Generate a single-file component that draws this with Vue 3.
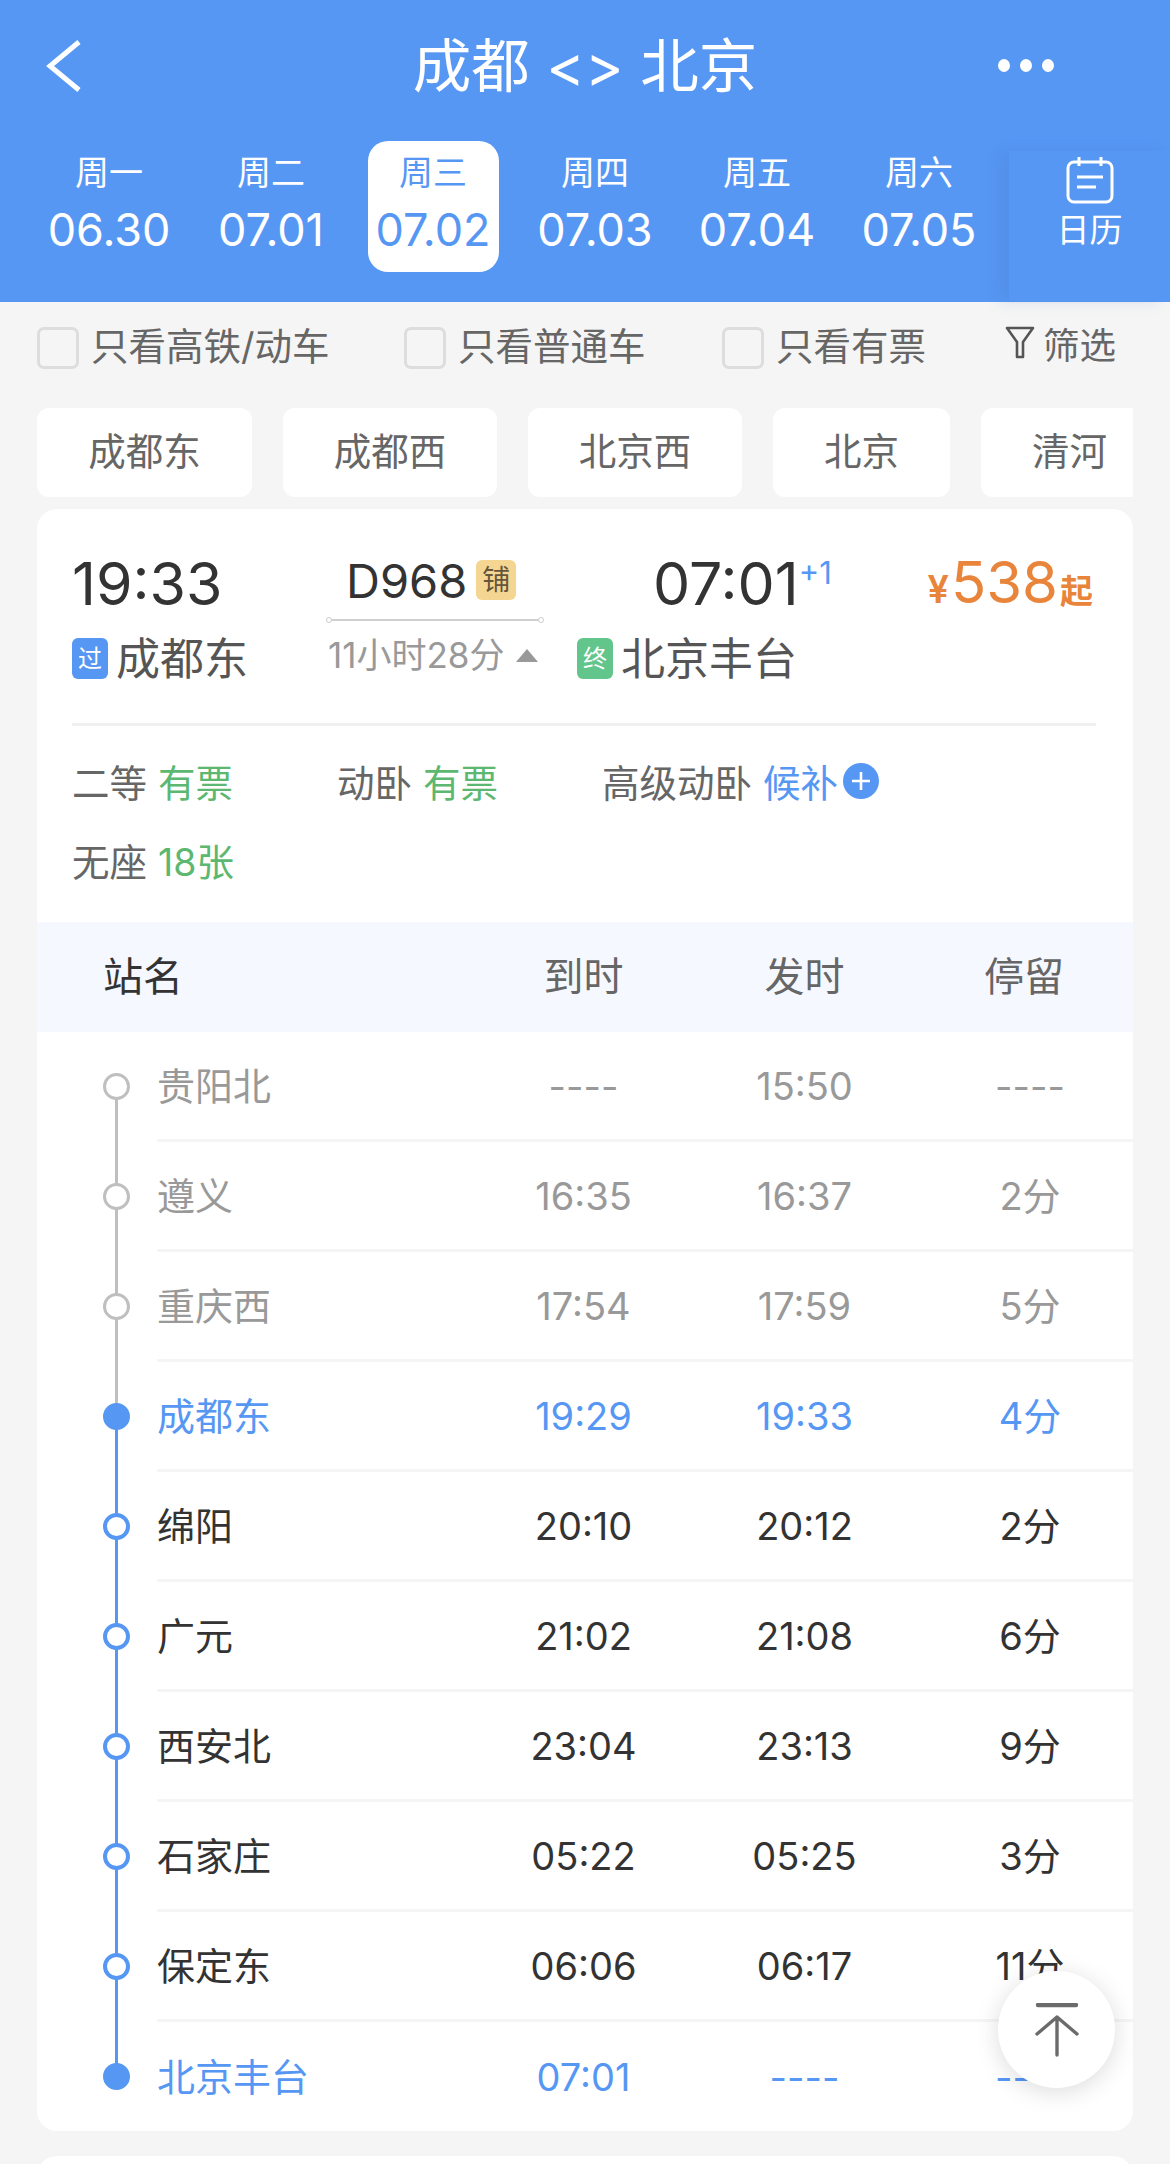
<script setup>
const days = [
  { week: "周一", date: "06.30" },
  { week: "周二", date: "07.01" },
  { week: "周三", date: "07.02", active: true },
  { week: "周四", date: "07.03" },
  { week: "周五", date: "07.04" },
  { week: "周六", date: "07.05" },
];

const filters = [
  { label: "只看高铁/动车", width: 367 },
  { label: "只看普通车", width: 318 },
  { label: "只看有票", width: 283 },
];

const chips = [
  { name: "成都东", width: 215 },
  { name: "成都西", width: 214 },
  { name: "北京西", width: 214 },
  { name: "北京", width: 177 },
  { name: "清河", width: 177 },
];

const stops = [
  { name: "贵阳北", arrive: "----", leave: "15:50", stay: "----", kind: "past" },
  { name: "遵义", arrive: "16:35", leave: "16:37", stay: "2分", kind: "past" },
  { name: "重庆西", arrive: "17:54", leave: "17:59", stay: "5分", kind: "past" },
  { name: "成都东", arrive: "19:29", leave: "19:33", stay: "4分", kind: "stop-on" },
  { name: "绵阳", arrive: "20:10", leave: "20:12", stay: "2分", kind: "next" },
  { name: "广元", arrive: "21:02", leave: "21:08", stay: "6分", kind: "next" },
  { name: "西安北", arrive: "23:04", leave: "23:13", stay: "9分", kind: "next" },
  { name: "石家庄", arrive: "05:22", leave: "05:25", stay: "3分", kind: "next" },
  { name: "保定东", arrive: "06:06", leave: "06:17", stay: "11分", kind: "next" },
  { name: "北京丰台", arrive: "07:01", leave: "----", stay: "----", kind: "stop-on last" },
];
</script>

<template>
  <div class="page">
    <header class="header">
      <div class="nav">
        <div class="nav-side">
          <svg class="back" width="40" height="54" viewBox="0 0 40 54">
            <path d="M35 3 L6 27 L35 51" fill="none" stroke="#fff" stroke-width="5" />
          </svg>
        </div>
        <div class="title">成都 &lt;&gt; 北京</div>
        <div class="nav-side more"><i></i><i></i><i></i></div>
      </div>
      <div class="strip">
        <div class="days">
          <div v-for="d in days" :key="d.date" class="day">
            <div class="day-box" :class="{ active: d.active }">
              <div class="week">{{ d.week }}</div>
              <div class="date">{{ d.date }}</div>
            </div>
          </div>
        </div>
        <div class="calendar">
          <svg width="48" height="48" viewBox="0 0 48 48" fill="none" stroke="#fff" stroke-width="3">
            <rect x="2" y="6" width="44" height="40" rx="6" />
            <path d="M13 1v9M35 1v9" />
            <path d="M11 21h26M11 31h19" />
          </svg>
          <div class="calendar-text">日历</div>
        </div>
      </div>
    </header>

    <div class="filters">
      <div v-for="f in filters" :key="f.label" class="filter" :style="{ width: f.width + 'px' }">
        <span class="check"></span>
        <span>{{ f.label }}</span>
      </div>
      <div class="filter-btn">
        <svg width="30" height="36" viewBox="0 0 30 36" fill="none" stroke="#555" stroke-width="2.6">
          <path d="M2 3h26L18 17v15h-6V17z" stroke-linejoin="round" />
        </svg>
        <span>筛选</span>
      </div>
    </div>

    <div class="chips">
      <div v-for="c in chips" :key="c.name" class="chip" :style="{ width: c.width + 'px' }">{{ c.name }}</div>
    </div>

    <section class="card">
      <div class="summary">
        <div class="col-from">
          <div class="big-time">19:33</div>
          <div class="station">
            <span class="tag tag-pass">过</span>
            <span>成都东</span>
          </div>
        </div>
        <div class="col-train">
          <div class="train">
            <span>D968</span>
            <span class="berth">铺</span>
          </div>
          <div class="line"></div>
          <div class="duration">
            <span>11小时28分</span>
            <span class="arrow-up"></span>
          </div>
        </div>
        <div class="col-to">
          <div class="big-time">07:01<sup class="plus">+1</sup></div>
          <div class="station">
            <span class="tag tag-end">终</span>
            <span>北京丰台</span>
          </div>
        </div>
        <div class="price">
          <span class="yen">¥</span><span class="amount">538</span><span class="qi">起</span>
        </div>
      </div>

      <div class="seats">
        <div class="seat-row">
          <div class="seat seat-1">二等 <em class="green">有票</em></div>
          <div class="seat seat-2">动卧 <em class="green">有票</em></div>
          <div class="seat">
            高级动卧 <em class="blue">候补</em>
            <svg class="plus-icon" width="36" height="36" viewBox="0 0 36 36">
              <circle cx="18" cy="18" r="18" fill="#5797f4" />
              <path d="M9 18h18M18 9v18" stroke="#fff" stroke-width="2.6" />
            </svg>
          </div>
        </div>
        <div class="seat-row">
          <div class="seat">无座 <em class="green">18张</em></div>
        </div>
      </div>

      <div class="table-head">
        <div class="th-name">站名</div>
        <div>到时</div>
        <div>发时</div>
        <div>停留</div>
      </div>

      <div v-for="s in stops" :key="s.name" class="stop" :class="s.kind">
        <span class="track"></span>
        <span class="dot"></span>
        <div class="stop-cells">
          <div class="stop-name">{{ s.name }}</div>
          <div>{{ s.arrive }}</div>
          <div>{{ s.leave }}</div>
          <div class="stop-stay">{{ s.stay }}</div>
        </div>
      </div>
    </section>

    <div class="next-card"></div>

    <div class="to-top">
      <svg width="44" height="54" viewBox="0 0 44 54" fill="none" stroke="#6b6b6b" stroke-linecap="round">
        <path d="M3 2h38" stroke-width="4.4" />
        <path d="M22 52V14M2 31l20-17 20 17" stroke-width="3.4" stroke-linejoin="round" />
      </svg>
    </div>
  </div>
</template>

<style>
html,
body {
  margin: 0;
  background: #f5f5f5;
}
</style>

<style scoped>
.page {
  position: relative;
  width: 1170px;
  height: 2164px;
  overflow: hidden;
  background: #f5f5f5;
  font-family: Inter, "Noto Sans CJK SC", sans-serif;
  color: #333;
}

.header {
  height: 302px;
  background: #5797f4;
  color: #fff;
}

.nav {
  height: 131px;
  padding: 0 42px;
  display: flex;
  align-items: center;
  box-sizing: border-box;
}

.nav-side {
  width: 150px;
  flex: none;
}

.back {
  display: block;
  margin-left: 2px;
}

.title {
  flex: 1;
  text-align: center;
  font-size: 58.5px;
  line-height: 131px;
}

.more {
  display: flex;
  justify-content: flex-end;
  gap: 10px;
  padding-right: 74px;
  box-sizing: border-box;
}

.more i {
  width: 12px;
  height: 13px;
  border-radius: 50%;
  background: #fff;
  flex: none;
}

.strip {
  display: flex;
  height: 171px;
}

.days {
  display: flex;
  padding: 10px 0 0 28px;
}

.day {
  width: 162px;
  display: flex;
  justify-content: center;
}

.day-box {
  width: 131px;
  height: 131px;
  border-radius: 20px;
  text-align: center;
  box-sizing: border-box;
  padding-top: 10px;
}

.day-box.active {
  background: #fff;
  color: #5797f4;
}

.week {
  font-size: 34px;
  line-height: 44px;
}

.date {
  font-size: 45px;
  line-height: 70px;
  white-space: nowrap;
}

.calendar {
  margin-left: 9px;
  width: 161px;
  height: 150px;
  margin-top: 20px;
  box-shadow: -10px 0 14px rgba(60, 110, 190, 0.18);
  text-align: center;
  padding-top: 5px;
  box-sizing: border-box;
}

.calendar svg {
  display: block;
  margin: 0 auto;
}

.calendar-text {
  font-size: 33px;
  line-height: 44px;
  margin-top: 4px;
}

.filters {
  height: 82px;
  margin-bottom: 24px;
  padding-left: 37px;
  display: flex;
  align-items: center;
  font-size: 37.5px;
  color: #666;
}

.filter {
  display: flex;
  align-items: center;
  gap: 12px;
  white-space: nowrap;
}

.check {
  width: 42px;
  height: 42px;
  margin-top: 10px;
  border: 3px solid #ddd;
  border-radius: 7px;
  box-sizing: border-box;
}

.filter-btn {
  display: flex;
  align-items: center;
  gap: 8px;
  font-size: 36.5px;
}

.chips {
  display: flex;
  gap: 31px;
  width: 1096px;
  margin-left: 37px;
  overflow: hidden;
}

.chip {
  height: 89px;
  flex: none;
  background: #fff;
  border-radius: 12px;
  font-size: 37.5px;
  line-height: 87px;
  text-align: center;
  color: #666;
}

.card {
  width: 1096px;
  margin: 12px 0 0 37px;
  height: 1622px;
  background: #fff;
  border-radius: 20px;
  overflow: hidden;
}

.summary {
  position: relative;
  height: 214px;
  margin: 0 37px 0 35px;
  border-bottom: 3px solid #f0f0f0;
  display: flex;
}

.col-from {
  width: 256px;
  padding-top: 42px;
}

.col-train {
  width: 249px;
  padding-top: 42px;
}

.col-to {
  padding-top: 42px;
}

.big-time {
  font-size: 59px;
  line-height: 66px;
  white-space: nowrap;
  color: #333;
}

.col-to .big-time {
  padding-left: 76px;
}

.plus {
  font-size: 31px;
  color: #5797f4;
  line-height: 0;
  vertical-align: 21px;
}

.station {
  display: flex;
  align-items: center;
  gap: 8px;
  margin-top: 12px;
  font-size: 44px;
  line-height: 60px;
  color: #555;
}

.tag {
  width: 36px;
  height: 41px;
  margin-top: -2px;
  border-radius: 6px;
  font-size: 24px;
  line-height: 41px;
  text-align: center;
  color: #fff;
}

.tag-pass {
  background: #5797f4;
}

.tag-end {
  background: #62c58c;
}

.train {
  display: flex;
  align-items: center;
  gap: 9px;
  height: 60px;
  padding-left: 18px;
  font-size: 47px;
  margin-top: -1px;
}

.berth {
  width: 40px;
  height: 40px;
  border-radius: 6px;
  background: #f4d592;
  color: #66553a;
  font-size: 28px;
  line-height: 40px;
  text-align: center;
}

.line {
  position: relative;
  width: 214px;
  height: 2px;
  margin-top: 9px;
  background: #d0d0d0;
}

.line::before,
.line::after {
  content: "";
  position: absolute;
  top: -2px;
  width: 6px;
  height: 6px;
  border-radius: 50%;
  border: 1px solid #ccc;
  box-sizing: border-box;
  background: #fff;
}

.line::before {
  left: -2px;
}

.line::after {
  right: -2px;
}

.duration {
  display: flex;
  align-items: center;
  gap: 12px;
  margin-top: 12px;
  font-size: 35px;
  line-height: 44px;
  color: #999;
  white-space: nowrap;
}

.arrow-up {
  width: 0;
  height: 0;
  border-left: 11px solid transparent;
  border-right: 11px solid transparent;
  border-bottom: 13px solid #999;
}

.price {
  position: absolute;
  right: 3px;
  top: 38px;
  color: #e9843b;
  white-space: nowrap;
}

.yen {
  font-size: 38px;
  font-weight: 600;
}

.amount {
  font-size: 58px;
  margin: 0 2px;
}

.qi {
  font-size: 33px;
  font-weight: bold;
}

.seats {
  padding: 15px 35px 0;
  height: 196px;
  box-sizing: border-box;
}

.seat-row {
  display: flex;
  height: 79px;
  align-items: center;
}

.seat {
  display: flex;
  align-items: center;
  gap: 11px;
  font-size: 37.5px;
  color: #666;
  white-space: nowrap;
}

.seat em {
  font-style: normal;
}

.seat-1,
.seat-2 {
  width: 265px;
}

.green {
  color: #5cb870;
}

.blue {
  color: #5797f4;
}

.plus-icon {
  margin-left: -6px;
}

.table-head {
  height: 110px;
  padding-bottom: 6px;
  box-sizing: border-box;
  background: #f5f8fe;
  display: grid;
  grid-template-columns: 436px 221px 221px 218px;
  align-items: center;
  text-align: center;
  font-size: 40px;
  color: #666;
}

.th-name {
  text-align: left;
  padding-left: 66px;
  color: #333;
}

.stop {
  position: relative;
  height: 110px;
  box-sizing: border-box;
}

.stop-cells {
  height: 110px;
  margin-left: 120px;
  box-sizing: border-box;
  border-bottom: 3px solid #f5f5f5;
  display: grid;
  grid-template-columns: 316px 221px 221px 218px;
  align-items: center;
  text-align: center;
  font-size: 38px;
  line-height: 48px;
  color: #333;
}

.stop-name {
  text-align: left;
  font-size: 38px;
}

.stop-stay {
  padding-left: 12px;
}

.stop.last .stop-cells {
  border-bottom: none;
}

.stop.past .stop-cells {
  color: #999;
}

.stop.stop-on .stop-cells {
  color: #5797f4;
}

.dot {
  position: absolute;
  left: 66px;
  top: 41px;
  width: 27px;
  height: 27px;
  border-radius: 50%;
  border: 4px solid #5797f4;
  box-sizing: border-box;
  background: #fff;
}

.stop.past .dot {
  border: 3px solid #bfbfbf;
}

.stop.stop-on .dot {
  background: #5797f4;
}

.track {
  position: absolute;
  left: 77.5px;
  top: 54px;
  width: 3px;
  height: 110px;
  background: #5797f4;
}

.stop.past .track {
  background: #bfbfbf;
}

.stop.last .track {
  display: none;
}

.next-card {
  width: 1096px;
  height: 60px;
  margin: 25px 0 0 37px;
  background: #fff;
  border-radius: 20px;
}

.to-top {
  position: absolute;
  left: 998px;
  top: 1971px;
  width: 117px;
  height: 117px;
  border-radius: 50%;
  background: #fff;
  box-shadow: 0 4px 24px rgba(0, 0, 0, 0.14);
  display: flex;
  align-items: center;
  justify-content: center;
}
</style>
